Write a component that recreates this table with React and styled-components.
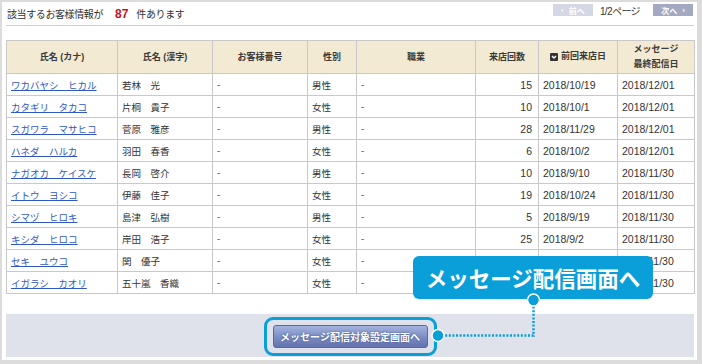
import React from "react"
import styled, { createGlobalStyle } from "styled-components"

const GlobalStyle = createGlobalStyle`
    body {
        margin: 0;
        background: #dcdcdc;
        font-family: "Liberation Sans", "Noto Sans CJK JP", sans-serif;
        color: #333;
    }
`

const ACCENT = "#0a9fd8"

const customers = [
    ["ワカバヤシ　ヒカル", "若林　光", "男性", 15, "2018/10/19", "2018/12/01"],
    ["カタギリ　タカコ", "片桐　貴子", "女性", 10, "2018/10/1", "2018/12/01"],
    ["スガワラ　マサヒコ", "菅原　雅彦", "男性", 28, "2018/11/29", "2018/12/01"],
    ["ハネダ　ハルカ", "羽田　春香", "女性", 6, "2018/10/2", "2018/12/01"],
    ["ナガオカ　ケイスケ", "長岡　啓介", "男性", 10, "2018/9/10", "2018/11/30"],
    ["イトウ　ヨシコ", "伊藤　佳子", "女性", 19, "2018/10/24", "2018/11/30"],
    ["シマヅ　ヒロキ", "島津　弘樹", "男性", 5, "2018/9/19", "2018/11/30"],
    ["キシダ　ヒロコ", "岸田　浩子", "女性", 25, "2018/9/2", "2018/11/30"],
    ["セキ　ユウコ", "関　優子", "女性", 9, "2018/9/5", "2018/11/30"],
    ["イガラシ　カオリ", "五十嵐　香織", "女性", 3, "2018/9/1", "2018/11/30"],
]

const colWidths = [111, 95, 95, 49, 119, 63, 79, 77]

const Frame = styled.div`
    position: relative;
    box-sizing: border-box;
    width: 702px;
    height: 364px;
    padding: 2px 5px 4px 2px;
    overflow: hidden;
`

const Panel = styled.div`
    box-sizing: border-box;
    height: 100%;
    background: #fff;
    padding: 0 3px 3px 4px;
    display: flex;
    flex-direction: column;
`

const TopBar = styled.div`
    height: 24px;
    display: flex;
    align-items: flex-start;
    justify-content: space-between;
    border-bottom: 1px solid #cfcfcf;
`

const Summary = styled.div`
    margin: 5px 0 0 1px;
    font-size: 10px;
    line-height: 14px;
    letter-spacing: -0.4px;
`

const Count = styled.span`
    color: #c4121a;
    font-weight: 700;
    font-size: 12px;
    margin: 0 8px 0 12px;
    letter-spacing: 0;
`

const Pager = styled.div`
    display: flex;
    align-items: center;
    margin: 2px 1px 0 0;
    height: 12px;
`

const PageButton = styled.span`
    box-sizing: border-box;
    width: 40px;
    height: 12px;
    display: flex;
    align-items: center;
    justify-content: center;
    gap: 5px;
    font-size: 8px;
    font-weight: 700;
    color: #fff;
    background: ${(p) => (p.$disabled ? "#d3d8e4" : "#a2a9c0")};
`

const PageInfo = styled.span`
    font-size: 10px;
    letter-spacing: -0.6px;
    margin: 0 13px 0 7px;
`

const Table = styled.table`
    margin-top: 14px;
    width: 688px;
    table-layout: fixed;
    border-collapse: collapse;
`

const Th = styled.th`
    height: 32px;
    padding: 0 2px;
    background: #f3ead3;
    border: 1px solid #c9c9c9;
    font-size: 9px;
    font-weight: 700;
    line-height: 15px;
    color: #3a3a3a;
    text-align: center;
`

const Td = styled.td`
    height: 21px;
    padding: 0 ${(p) => (p.$right ? "6px" : "4px")} 0 4px;
    border: 1px solid #c9c9c9;
    font-size: ${(p) => (p.$latin ? "10.5px" : "9.5px")};
    color: #333;
    text-align: ${(p) => (p.$right ? "right" : "left")};
    white-space: nowrap;
    overflow: hidden;
`

const NameLink = styled.a`
    color: #3057c8;
    text-decoration: underline;
    font-size: 9.5px;
`

const SortLabel = styled.span`
    display: inline-flex;
    align-items: center;
    gap: 3px;
`

const Footer = styled.div`
    margin-top: 20px;
    height: 44px;
    box-sizing: border-box;
    padding-top: 1px;
    background: #dfe2ea;
    display: flex;
    align-items: center;
    justify-content: center;
`

const Ring = styled.div`
    box-sizing: border-box;
    padding: 5px 6px;
    border: 3px solid ${ACCENT};
    border-radius: 9px;
`

const ActionButton = styled.button`
    box-sizing: border-box;
    width: 155px;
    height: 23px;
    padding: 0;
    display: block;
    border: 1px solid #5a6a9f;
    border-radius: 3px;
    background: linear-gradient(#a3b2dd, #7b8cc4 55%, #6273ae);
    color: #fff;
    font-family: "Noto Sans CJK JP", sans-serif;
    font-size: 10px;
    font-weight: 700;
    text-shadow: 0 0 2px rgba(30, 40, 90, 0.7);
    cursor: pointer;
`

const Callout = styled.div`
    position: absolute;
    left: 413px;
    top: 256px;
    width: 240px;
    height: 43px;
    border-radius: 6px;
    background: ${ACCENT};
    color: #fff;
    font-family: "Noto Sans CJK JP", sans-serif;
    font-size: 21.5px;
    font-weight: 700;
    display: flex;
    align-items: center;
    justify-content: center;
    padding-bottom: 1px;
    box-sizing: border-box;
`

const Connector = styled.svg`
    position: absolute;
    left: 0;
    top: 0;
    pointer-events: none;
`

const SortIcon = () => (
    <svg width="8" height="8" viewBox="0 0 8 8">
        <rect width="8" height="8" rx="1" fill="#333" />
        <path d="M2 3 L4 5 L6 3" fill="none" stroke="#fff" strokeWidth="1.3" />
    </svg>
)

const App = () => (
    <>
        <GlobalStyle />
        <Frame>
            <Panel>
                <TopBar>
                    <Summary>
                        該当するお客様情報が<Count>87</Count>件あります
                    </Summary>
                    <Pager>
                        <PageButton $disabled>
                            <span>‹</span>
                            <span>前へ</span>
                        </PageButton>
                        <PageInfo>1/2ページ</PageInfo>
                        <PageButton>
                            <span>次へ</span>
                            <span>›</span>
                        </PageButton>
                    </Pager>
                </TopBar>

                <Table>
                    <colgroup>
                        {colWidths.map((w, i) => (
                            <col key={i} style={{ width: w }} />
                        ))}
                    </colgroup>
                    <thead>
                        <tr>
                            <Th>氏名 (カナ)</Th>
                            <Th>氏名 (漢字)</Th>
                            <Th>お客様番号</Th>
                            <Th>性別</Th>
                            <Th>職業</Th>
                            <Th>来店回数</Th>
                            <Th>
                                <SortLabel>
                                    <SortIcon />
                                    前回来店日
                                </SortLabel>
                            </Th>
                            <Th>
                                メッセージ
                                <br />
                                最終配信日
                            </Th>
                        </tr>
                    </thead>
                    <tbody>
                        {customers.map(([kana, kanji, sex, visits, last, sent]) => (
                            <tr key={kana}>
                                <Td>
                                    <NameLink href="#">{kana}</NameLink>
                                </Td>
                                <Td>{kanji}</Td>
                                <Td>-</Td>
                                <Td>{sex}</Td>
                                <Td>-</Td>
                                <Td $latin $right>
                                    {visits}
                                </Td>
                                <Td $latin>{last}</Td>
                                <Td $latin>{sent}</Td>
                            </tr>
                        ))}
                    </tbody>
                </Table>

                <Footer>
                    <Ring>
                        <ActionButton>メッセージ配信対象設定画面へ</ActionButton>
                    </Ring>
                </Footer>
            </Panel>

            <Callout>メッセージ配信画面へ</Callout>
            <Connector width="702" height="364">
                <path
                    d="M438 335.5 H533.5 V300"
                    fill="none"
                    stroke={ACCENT}
                    strokeWidth="2.5"
                    strokeDasharray="2 1.6"
                />
                <circle cx="438" cy="335.5" r="6" fill={ACCENT} stroke="#fff" strokeWidth="1.5" />
                <circle cx="533.5" cy="300" r="6" fill={ACCENT} stroke="#fff" strokeWidth="1.5" />
            </Connector>
        </Frame>
    </>
)

export default App
